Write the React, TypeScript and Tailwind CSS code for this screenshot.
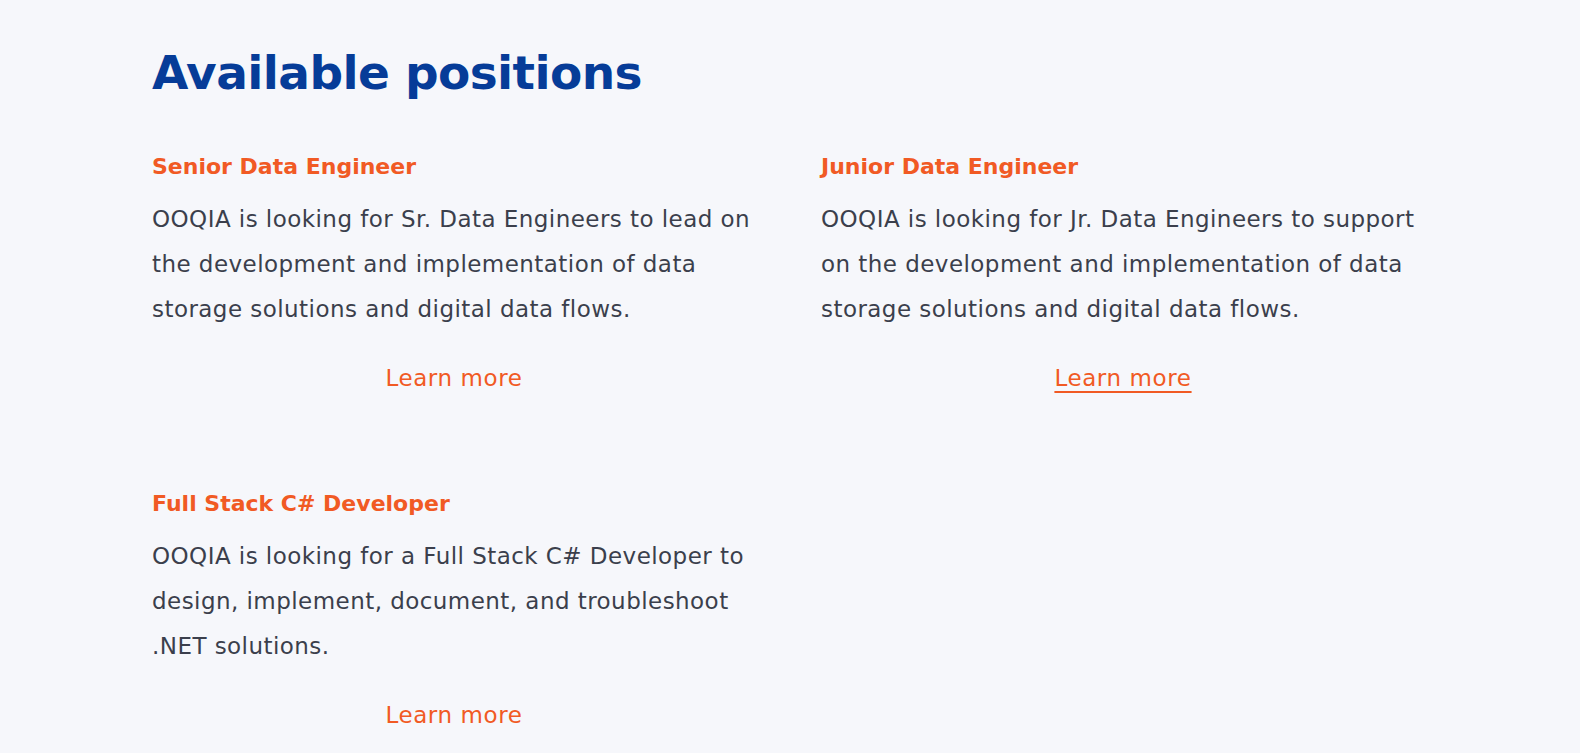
const jobs = [
  {
    title: 'Senior Data Engineer',
    lines: [
      'OOQIA is looking for Sr. Data Engineers to lead on',
      'the development and implementation of data',
      'storage solutions and digital data flows.',
    ],
    hover: false,
  },
  {
    title: 'Junior Data Engineer',
    lines: [
      'OOQIA is looking for Jr. Data Engineers to support',
      'on the development and implementation of data',
      'storage solutions and digital data flows.',
    ],
    hover: true,
  },
  {
    title: 'Full Stack C# Developer',
    lines: [
      'OOQIA is looking for a Full Stack C# Developer to',
      'design, implement, document, and troubleshoot',
      '.NET solutions.',
    ],
    hover: false,
  },
]

function JobCard({ job }: { job: (typeof jobs)[number] }) {
  return (
    <div className="flex flex-col">
      <h3 className="text-[22px] leading-[30px] font-bold text-[#f15a24]">{job.title}</h3>
      <p className="mt-[15px] text-[23px] leading-[45px] text-[#3b3f4c] font-normal tracking-[0.45px]">
        {job.lines.map((line) => (
          <span key={line} className="block whitespace-nowrap">
            {line}
          </span>
        ))}
      </p>
      <div className="mt-[31px] flex justify-center">
        <a
          href="#"
          className={
            'text-[23px] leading-[30px] font-normal text-[#f15a24] tracking-[0.6px] ' +
            (job.hover ? 'underline underline-offset-[5px] decoration-[2px]' : 'no-underline')
          }
        >
          Learn more
        </a>
      </div>
    </div>
  )
}

export default function App() {
  return (
    <div
      className="min-h-[753px] bg-[#f6f7fb] pl-[152px] pt-[43px]"
      style={{ fontFamily: '"DejaVu Sans", sans-serif' }}
    >
      <h2 className="text-[47px] leading-[60px] font-bold tracking-[-0.6px] text-[#063c98]">
        Available positions
      </h2>
      <div className="mt-[49px] grid grid-cols-[604px_604px] gap-x-[65px] gap-y-[96px]">
        {jobs.map((job) => (
          <JobCard key={job.title} job={job} />
        ))}
      </div>
    </div>
  )
}
